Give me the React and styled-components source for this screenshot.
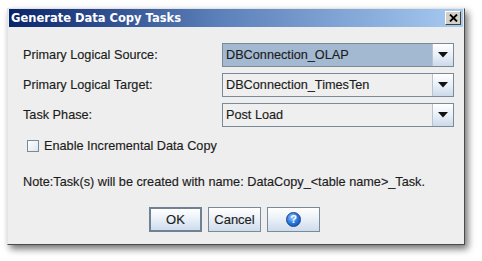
import React from "react";
import styled, { createGlobalStyle } from "styled-components";

const Global = createGlobalStyle`
  html, body { margin: 0; padding: 0; background: #ffffff; }
  body { font-family: "Liberation Sans", Arial, sans-serif; }
`;

const Page = styled.div`
  padding: 8px 17px 16px 7px;
  width: 482px;
  height: 261px;
  box-sizing: border-box;
`;

const Window = styled.div`
  width: 458px;
  height: 237px;
  box-sizing: border-box;
  background: #eeeeee;
  border: 1px solid;
  border-color: #e4e4e4 #4a4a4a #4a4a4a #e4e4e4;
  box-shadow: 3px 4px 7px rgba(0, 0, 0, 0.55);
  display: flex;
  flex-direction: column;
`;

const TitleBar = styled.div`
  height: 18px;
  margin: 0 1px;
  background: linear-gradient(to right, #0a246a 0%, #5a7eb8 45%, #a6caf0 100%);
  display: flex;
  align-items: center;
  justify-content: space-between;
  padding: 0 2px 0 2px;
`;

const Title = styled.span`
  color: #ffffff;
  font-weight: bold;
  font-family: "DejaVu Sans", Verdana, sans-serif;
  font-size: 11.5px;
`;

const CloseButton = styled.div`
  width: 16px;
  height: 14px;
  box-sizing: border-box;
  background: #d4d0c8;
  border: 1px solid;
  border-color: #ffffff #404040 #404040 #ffffff;
  display: flex;
  align-items: center;
  justify-content: center;
`;

const Body = styled.div`
  flex: 1;
  padding: 16px 9px 0 15px;
  display: flex;
  flex-direction: column;
  color: #1c1c1c;
  font-size: 12.7px;
  -webkit-text-stroke: 0.15px #1c1c1c;
`;

const Form = styled.div`
  display: grid;
  grid-template-columns: 199px 232px;
  row-gap: 6px;
  align-items: center;
`;

const Label = styled.span``;

const Combo = styled.div`
  height: 24px;
  box-sizing: border-box;
  border: 1px solid #7a8a99;
  display: flex;
  background: ${(p) => (p.$focused ? "#a3b9d2" : "#efefef")};
`;

const ComboText = styled.span`
  flex: 1;
  display: flex;
  align-items: center;
  padding-left: 2px;
  margin: 1px;
`;

const ArrowButton = styled.div`
  width: 20px;
  border-left: 1px solid #b8c4d0;
  background: linear-gradient(to bottom, #ffffff 0%, #e6eef7 55%, #cbd9e8 100%);
  display: flex;
  align-items: center;
  justify-content: center;
`;

const CheckRow = styled.label`
  display: flex;
  align-items: center;
  gap: 5px;
  margin: 12px 0 0 4px;
`;

const CheckBox = styled.span`
  width: 12px;
  height: 12px;
  box-sizing: border-box;
  border: 1px solid #7a8a99;
  background: linear-gradient(135deg, #ffffff 0%, #dce6f0 100%);
`;

const Note = styled.div`
  margin-top: 22px;
`;

const ButtonRow = styled.div`
  display: flex;
  justify-content: center;
  gap: 6px;
  margin-top: 18px;
  padding-right: 9px;
`;

const Button = styled.div`
  width: 53px;
  height: 25px;
  box-sizing: border-box;
  border: ${(p) => (p.$default ? "2px solid #6f8193" : "1px solid #7a8a99")};
  background: linear-gradient(to bottom, #ffffff 0%, #eef3f9 40%, #cddcec 100%);
  display: flex;
  align-items: center;
  justify-content: center;
  font-size: 13px;
`;

const HelpIcon = styled.span`
  width: 15px;
  height: 15px;
  border-radius: 50%;
  background: radial-gradient(circle at 40% 35%, #9fd0ff 0%, #2f7fe0 45%, #0b3fa8 100%);
  border: 1px solid #1a3f8f;
  box-sizing: border-box;
  color: #ffffff;
  -webkit-text-stroke: 0;
  font-weight: bold;
  font-size: 11px;
  display: flex;
  align-items: center;
  justify-content: center;
  line-height: 1;
`;

const Arrow = () => (
  <svg width="10" height="6" viewBox="0 0 10 6">
    <path d="M0 0 H10 L5 5.5 Z" fill="#111111" />
  </svg>
);

const Field = ({ label, value, focused }) => (
  <>
    <Label>{label}</Label>
    <Combo $focused={focused}>
      <ComboText>{value}</ComboText>
      <ArrowButton>
        <Arrow />
      </ArrowButton>
    </Combo>
  </>
);

export default function App() {
  return (
    <Page>
      <Global />
      <Window>
        <TitleBar>
          <Title>Generate Data Copy Tasks</Title>
          <CloseButton>
            <svg width="9" height="8" viewBox="0 0 9 8">
              <path d="M1 0.5 L8 7.5 M8 0.5 L1 7.5" stroke="#000" strokeWidth="1.8" />
            </svg>
          </CloseButton>
        </TitleBar>
        <Body>
          <Form>
            <Field label="Primary Logical Source:" value="DBConnection_OLAP" focused />
            <Field label="Primary Logical Target:" value="DBConnection_TimesTen" />
            <Field label="Task Phase:" value="Post Load" />
          </Form>
          <CheckRow>
            <CheckBox />
            <span>Enable Incremental Data Copy</span>
          </CheckRow>
          <Note>Note:Task(s) will be created with name: DataCopy_&lt;table name&gt;_Task.</Note>
          <ButtonRow>
            <Button $default>OK</Button>
            <Button>Cancel</Button>
            <Button>
              <HelpIcon>?</HelpIcon>
            </Button>
          </ButtonRow>
        </Body>
      </Window>
    </Page>
  );
}
